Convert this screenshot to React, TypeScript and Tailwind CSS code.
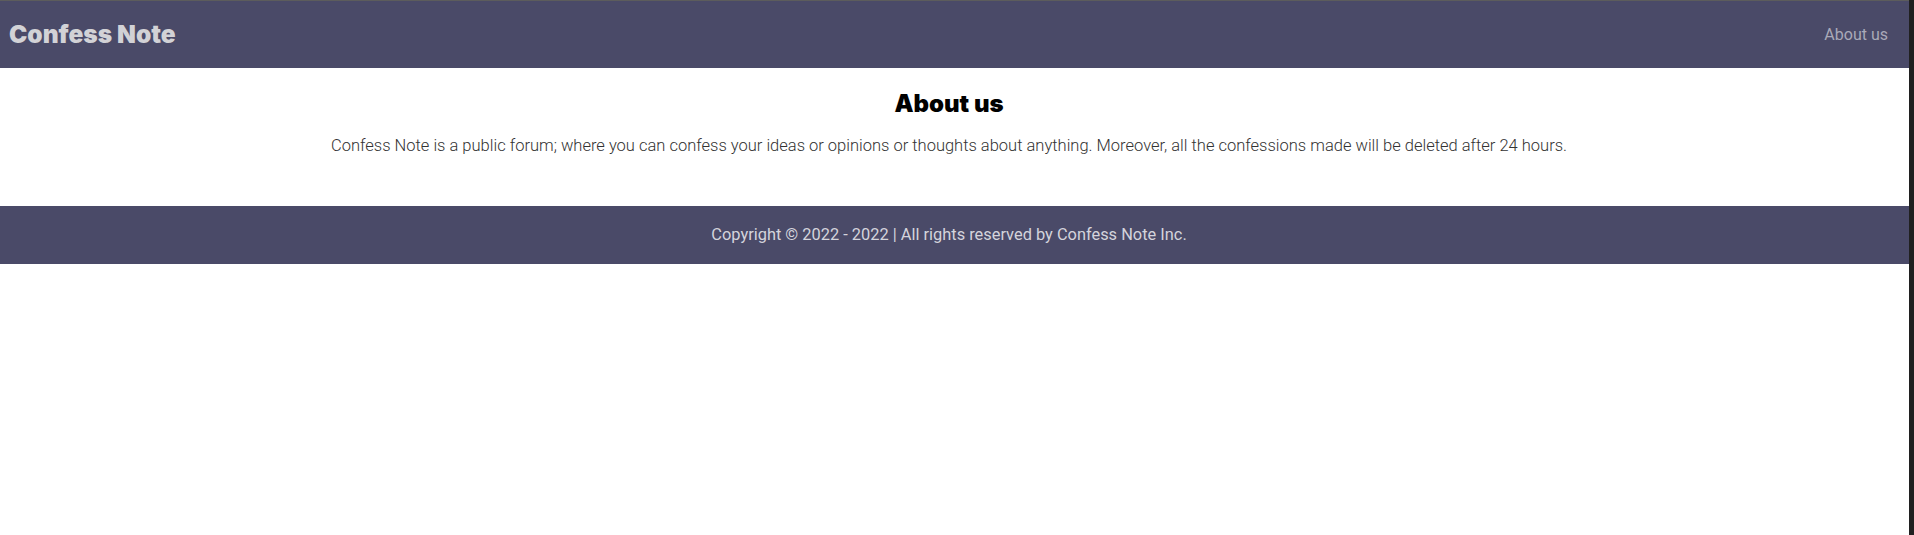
export default function App() {
  return (
    <div className="flex h-[535px] w-full bg-white" style={{ fontFamily: "Roboto, 'Liberation Sans', sans-serif" }}>
      <div className="flex flex-1 flex-col">
        <header className="flex h-[68px] items-center justify-between border-t border-[#5c5c5c] bg-[#4a4a68] pl-[9px] pr-[21px]">
          <span className="text-[24.5px] font-black text-[#d2d2d6]" style={{ fontFamily: "Inter, Roboto, sans-serif" }}>Confess Note</span>
          <a className="text-[16px] text-[#a9a9b8]">About us</a>
        </header>
        <main className="flex flex-col items-center pt-[20px] pb-[48px] pr-[11px]">
          <h1 className="text-[24px] font-black leading-[32px] text-black" style={{ fontFamily: "Inter, Roboto, sans-serif" }}>About us</h1>
          <p className="mt-[14px] text-[16.5px] font-light leading-[24px] text-[#333]">
            Confess Note is a public forum; where you can confess your ideas or opinions or thoughts about anything. Moreover, all the confessions made will be deleted after 24 hours.
          </p>
        </main>
        <footer className="flex h-[58px] items-center justify-center bg-[#4a4a68] pr-[11px] text-[16.4px] text-[#d4d4dc]">
          Copyright © 2022 - 2022 | All rights reserved by Confess Note Inc.
        </footer>
      </div>
      <div className="w-[5px] bg-[#202020]" />
    </div>
  );
}
